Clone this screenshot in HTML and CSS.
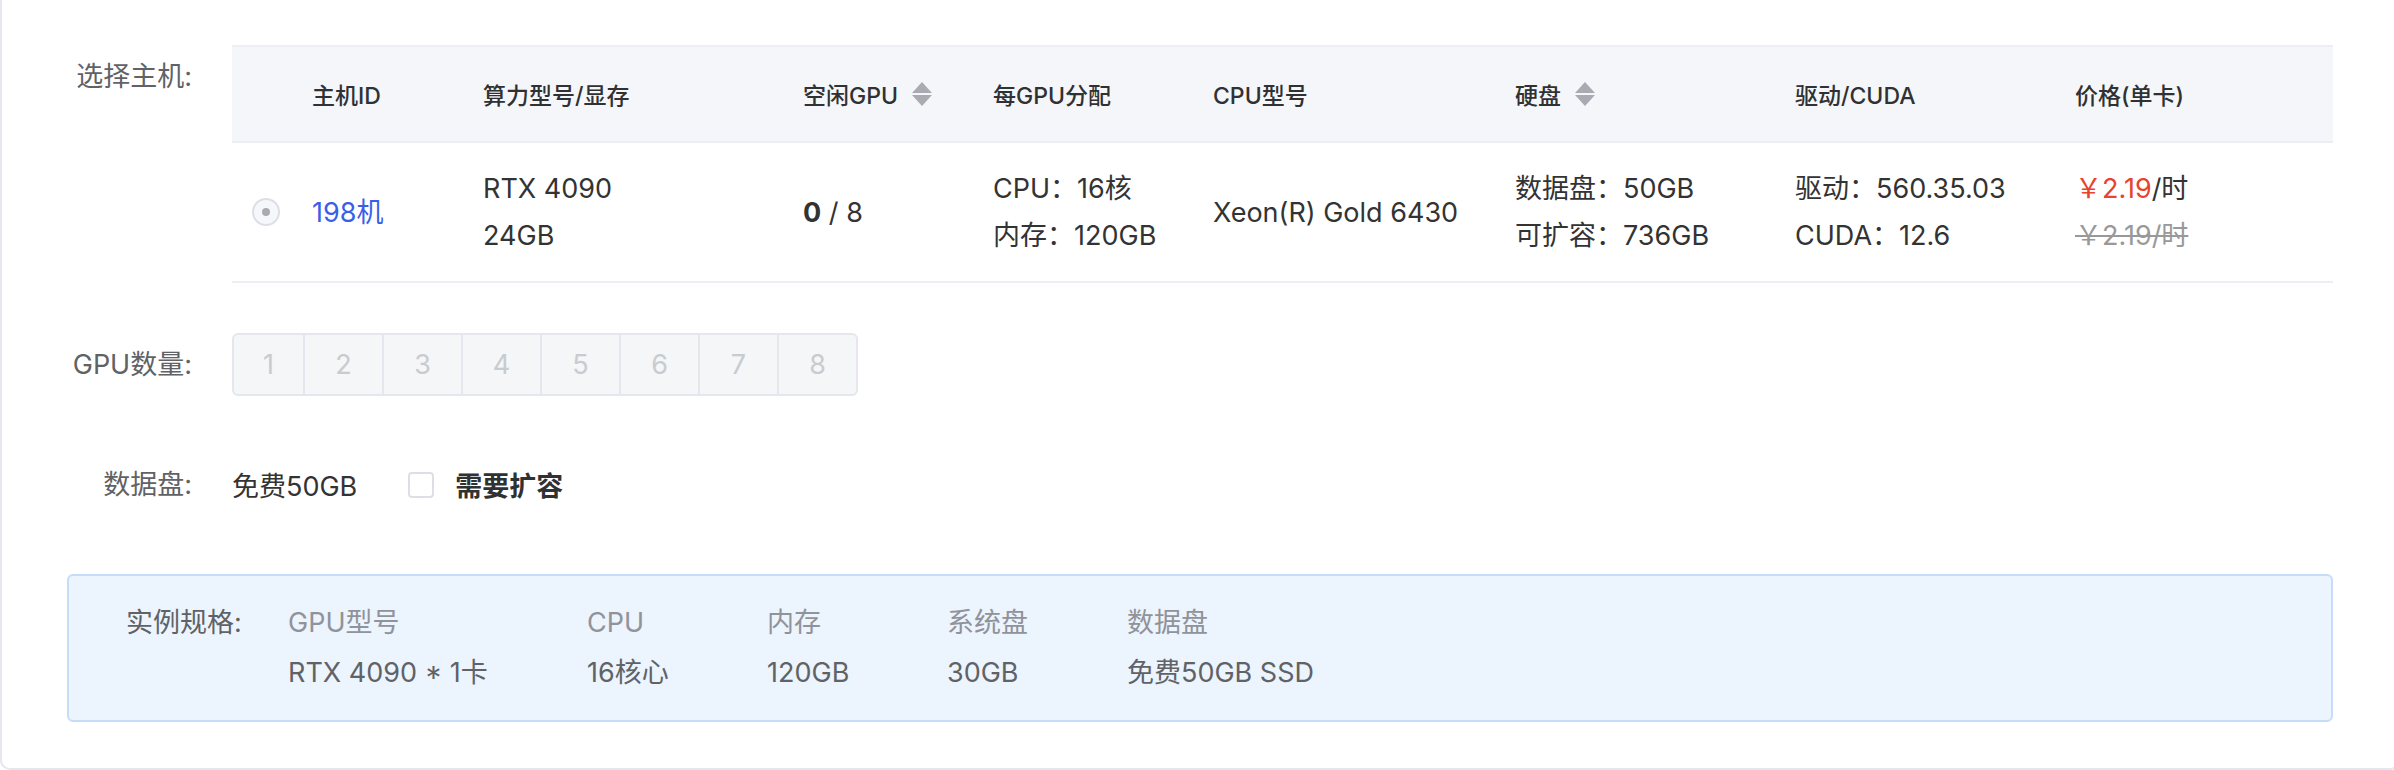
FILE: index.html
```html
<!DOCTYPE html>
<html lang="zh-CN">
<head>
    <meta charset="UTF-8">
    <meta name="viewport" content="width=device-width, initial-scale=1.0">
    <title>选择主机</title>
    <link rel="stylesheet" href="styles.css">
</head>
<body>
    <div class="card">
        <!-- host table -->
        <div class="form-row row-host">
            <div class="form-label">选择主机:</div>
            <div class="host-table">
                <div class="t-row t-head">
                    <div class="cell"></div>
                    <div class="cell">主机ID</div>
                    <div class="cell">算力型号/显存</div>
                    <div class="cell">空闲GPU
                        <svg class="sort" width="20" height="24" viewBox="0 0 20 24"><polygon points="10,0 20,11 0,11"/><polygon points="0,13 20,13 10,24"/></svg>
                    </div>
                    <div class="cell">每GPU分配</div>
                    <div class="cell">CPU型号</div>
                    <div class="cell">硬盘
                        <svg class="sort" width="20" height="24" viewBox="0 0 20 24"><polygon points="10,0 20,11 0,11"/><polygon points="0,13 20,13 10,24"/></svg>
                    </div>
                    <div class="cell">驱动/CUDA</div>
                    <div class="cell">价格(单卡)</div>
                </div>
                <div class="t-row t-body">
                    <div class="cell"><span class="radio"><span class="radio-dot"></span></span></div>
                    <div class="cell"><a class="host-link" href="#">198机</a></div>
                    <div class="cell"><div>RTX 4090</div><div>24GB</div></div>
                    <div class="cell"><div><b>0</b> / 8</div></div>
                    <div class="cell"><div>CPU：16核</div><div>内存：120GB</div></div>
                    <div class="cell"><div>Xeon(R) Gold 6430</div></div>
                    <div class="cell"><div>数据盘：50GB</div><div>可扩容：736GB</div></div>
                    <div class="cell"><div>驱动：560.35.03</div><div>CUDA：12.6</div></div>
                    <div class="cell">
                        <div><span class="price">￥2.19</span>/时</div>
                        <div class="price-old">￥2.19/时</div>
                    </div>
                </div>
            </div>
        </div>

        <!-- gpu count -->
        <div class="form-row row-gpu">
            <div class="form-label">GPU数量:</div>
            <div class="gpu-group">
                <span class="gpu-btn">1</span>
                <span class="gpu-btn">2</span>
                <span class="gpu-btn">3</span>
                <span class="gpu-btn">4</span>
                <span class="gpu-btn">5</span>
                <span class="gpu-btn">6</span>
                <span class="gpu-btn">7</span>
                <span class="gpu-btn">8</span>
            </div>
        </div>

        <!-- data disk -->
        <div class="form-row row-disk">
            <div class="form-label">数据盘:</div>
            <div class="disk">
                <span>免费50GB</span>
                <label class="check"><span class="check-box"></span><span class="check-text">需要扩容</span></label>
            </div>
        </div>

        <div class="spec">
            <div class="spec-label">实例规格:</div>
            <div class="spec-col">
                <div class="spec-title">GPU型号</div>
                <div>RTX 4090 * 1卡</div>
            </div>
            <div class="spec-col">
                <div class="spec-title">CPU</div>
                <div>16核心</div>
            </div>
            <div class="spec-col">
                <div class="spec-title">内存</div>
                <div>120GB</div>
            </div>
            <div class="spec-col">
                <div class="spec-title">系统盘</div>
                <div>30GB</div>
            </div>
            <div class="spec-col">
                <div class="spec-title">数据盘</div>
                <div>免费50GB SSD</div>
            </div>
        </div>
    </div>
</body>
</html>
```

FILE: styles.css
```css
* {
    margin: 0;
    padding: 0;
    box-sizing: border-box;
}

body {
    font-family: Inter, "Noto Sans CJK SC", sans-serif;
    font-size: 27px;
    color: #333;
    background: #fff;
    overflow: hidden;
}

.card {
    width: 2400px;
    height: 770px;
    padding: 45px 65px 46px 0;
    border: 2px solid #e4e7ed;
    border-top: none;
    border-radius: 0 0 10px 10px;
}

.form-row {
    display: grid;
    grid-template-columns: 190px 1fr;
    column-gap: 40px;
}

.form-label {
    text-align: right;
    line-height: 63px;
    color: #606266;
}

.row-gpu {
    margin-top: 50px;
}

.row-disk {
    margin-top: 57px;
}

/* table */
.t-row {
    display: grid;
    grid-template-columns: 60px 171px 320px 190px 220px 302px 280px 280px 1fr;
    border-bottom: 2px solid #ebeef5;
}

.t-head {
    height: 98px;
    background: #f5f6fa;
    border-top: 2px solid #ebeef5;
    font-size: 23px;
    font-weight: 500;
    color: #303133;
}

.t-body {
    height: 140px;
    line-height: 47px;
}

.cell {
    padding-left: 20px;
    display: flex;
    flex-direction: column;
    justify-content: center;
    white-space: nowrap;
}

.t-head .cell {
    flex-direction: row;
    align-items: center;
    justify-content: flex-start;
}

.sort {
    margin-left: 14px;
    fill: #a8abb2;
}

.radio {
    width: 28px;
    height: 28px;
    border: 2px solid #dcdfe6;
    border-radius: 50%;
    background: #f5f7fa;
    display: flex;
    align-items: center;
    justify-content: center;
}

.radio-dot {
    width: 8px;
    height: 8px;
    border-radius: 50%;
    background: #a8abb2;
}

.host-link {
    color: #3b5ee8;
    text-decoration: none;
}

.price {
    color: #e8432e;
}

.price-old {
    color: #999;
    text-decoration: line-through;
}

/* gpu buttons */
.gpu-group {
    display: flex;
}

.gpu-btn {
    width: 79px;
    height: 63px;
    line-height: 59px;
    text-align: center;
    color: #c8cbd0;
    background: #f5f6f7;
    border: 2px solid #e4e7ed;
    border-left: none;
}

.gpu-btn:first-child {
    width: 73px;
    border-left: 2px solid #e4e7ed;
    border-radius: 6px 0 0 6px;
}

.gpu-btn:last-child {
    border-radius: 0 6px 6px 0;
}

/* data disk */
.disk {
    display: flex;
    align-items: center;
    height: 63px;
}

.check {
    display: flex;
    align-items: center;
    margin-left: 51px;
}

.check-box {
    width: 26px;
    height: 26px;
    border: 2px solid #dcdfe6;
    border-radius: 4px;
    background: #fff;
}

.check-text {
    margin-left: 21px;
    font-weight: 700;
    color: #303133;
}

/* spec box */
.spec {
    margin: 58px 0 0 65px;
    height: 148px;
    padding: 22px 57px;
    display: flex;
    background: #ecf4fe;
    border: 2px solid #c6dcf8;
    border-radius: 6px;
    line-height: 50px;
    color: #606266;
    white-space: nowrap;
}

.spec-label {
    width: 162px;
}

.spec-col {
    width: 180px;
}

.spec-col:nth-child(2) {
    width: 299px;
}

.spec-col:last-child {
    width: auto;
}

.spec-title {
    color: #909399;
}
```
